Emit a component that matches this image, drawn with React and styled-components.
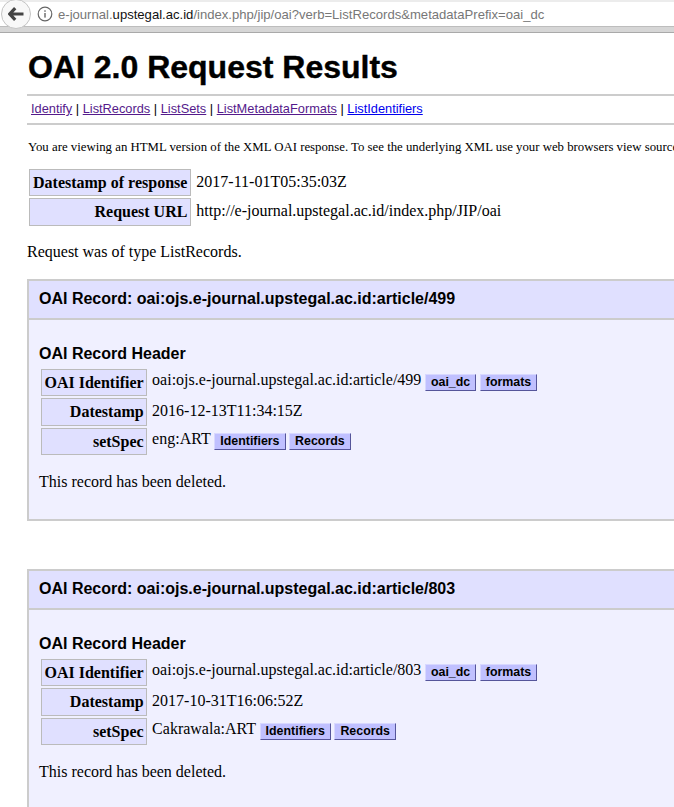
import React from 'react';
import styled, { createGlobalStyle } from 'styled-components';

const GlobalStyle = createGlobalStyle`
  html, body {
    margin: 0;
    padding: 0;
    width: 674px;
    height: 807px;
    overflow: hidden;
    background: #fff;
  }
  body {
    font-family: 'Liberation Serif', 'Times New Roman', serif;
    font-size: 16px;
    color: #000;
  }
`;
const Toolbar = styled.div`
  height: 33px;
  box-sizing: border-box;
  background: #d6d6d6;
  border-bottom: 1px solid #a9a9a9;
  padding-top: 2px;
  position: relative;
`;
const AddressBar = styled.div`
  height: 25px;
  box-sizing: border-box;
  background: #fff;
  border-bottom: 1px solid #bdbdbd;
  display: flex;
  align-items: center;
  padding-left: 37px;
  font-family: 'Liberation Sans', Arial, sans-serif;
  font-size: 13.1px;
  color: #777;
  white-space: nowrap;
`;
const TopStrip = styled.div`
  position: absolute;
  top: 0;
  left: 0;
  right: 0;
  height: 2px;
  background: #ececec;
`;
const BackButton = styled.div`
  position: absolute;
  left: 1px;
  top: -1px;
  width: 30px;
  height: 30px;
  box-sizing: border-box;
  border-radius: 50%;
  background: #f8f8f8;
  border: 1px solid #c4c4c4;
  display: flex;
  align-items: center;
  justify-content: center;
`;
const InfoIcon = styled.svg`
  width: 16px;
  height: 16px;
  margin-right: 5px;
  flex: none;
`;
const Host = styled.span`
  color: #111;
`;
const Page = styled.div`
  width: 760px;
  padding: 0 0 0 27px;
`;
const Title = styled.h1`
  font-family: 'Liberation Sans', Arial, sans-serif;
  font-size: 32px;
  line-height: 39px;
  font-weight: 700;
  margin: 0;
  padding: 15px 0 7px 1px;
  border-bottom: 2px solid #ccc;
  -webkit-text-stroke: 0.4px #000;
`;
const Nav = styled.div`
  font-family: 'Liberation Sans', Arial, sans-serif;
  font-size: 12.8px;
  line-height: 15px;
  padding: 5px 0 7px 4px;
  height: 15px;
  border-bottom: 2px solid #ccc;
`;
const NavLink = styled.a`
  color: ${(props) => (props.$visited ? '#551a8b' : '#00e')};
  text-decoration: underline;
`;
const Intro = styled.p`
  font-size: 12.8px;
  line-height: 14px;
  margin: 15px 0 13px 1px;
  white-space: nowrap;
`;
const InfoTable = styled.table`
  border-collapse: separate;
  border-spacing: 2px;
`;
const Label = styled.td`
  background: #e0e0ff;
  border: 1px solid #bbb;
  padding: 4px ${(props) => (props.$tight ? '2.5px' : '3px')};
  font-weight: 700;
  text-align: right;
  line-height: 17.4px;
  white-space: nowrap;
`;
const Value = styled.td`
  padding: 0 3px 3px 3px;
  line-height: 17px;
  white-space: nowrap;
`;
const Paragraph = styled.p`
  margin: ${(props) => props.$margin};
  line-height: 18px;
`;
const Record = styled.div`
  background: #f0f0ff;
  border: 2px solid #ccc;
  margin-bottom: 48px;
`;
const RecordTitle = styled.h2`
  font-family: 'Liberation Sans', Arial, sans-serif;
  font-size: 16px;
  line-height: 18px;
  margin: 0;
  padding: 9px 10px 10px;
  background: #e0e0ff;
  border-bottom: 2px solid #ccc;
`;
const RecordBody = styled.div`
  padding: 25px 10px 28px;
`;
const SectionTitle = styled.h3`
  font-family: 'Liberation Sans', Arial, sans-serif;
  font-size: 16px;
  line-height: 18px;
  margin: 0 0 4px;
`;
const Tag = styled.a`
  display: inline-block;
  font-family: 'Liberation Sans', Arial, sans-serif;
  font-size: 12.4px;
  line-height: 15px;
  font-weight: 700;
  color: #000;
  background: #c0c0ff;
  padding: 0 5px;
  margin-left: 3.6px;
  border-right: 1px solid #55559a;
  border-bottom: 1px solid #55559a;
  border-top: 1px solid #d8d8ff;
  border-left: 1px solid #d8d8ff;
  vertical-align: -1px;
`;

const records = [
  { id: '499', date: '2016-12-13T11:34:15Z', spec: 'eng:ART' },
  { id: '803', date: '2017-10-31T16:06:52Z', spec: 'Cakrawala:ART' },
];

const App = () => {
  return (
    <>
      <GlobalStyle />
      <Toolbar>
        <TopStrip />
        <AddressBar>
          <InfoIcon viewBox="0 0 16 16" fill="none">
            <circle cx="8" cy="8" r="6.8" stroke="#666" strokeWidth="1.2" />
            <rect x="7.3" y="7" width="1.4" height="4.6" fill="#666" />
            <rect x="7.3" y="4.3" width="1.4" height="1.5" fill="#666" />
          </InfoIcon>
          <span>
            e-journal.<Host>upstegal.ac.id</Host>/index.php/jip/oai?verb=ListRecords&amp;metadataPrefix=oai_dc
          </span>
        </AddressBar>
        <BackButton>
          <svg width="16" height="14" viewBox="0 0 16 14">
            <path d="M7.2 1.2 L1.8 7 L7.2 12.8 M2.5 7 H15.5" fill="none" stroke="#444" strokeWidth="3.2" />
          </svg>
        </BackButton>
      </Toolbar>
      <Page>
        <Title>OAI 2.0 Request Results</Title>
        <Nav>
          <NavLink $visited href="#">Identify</NavLink> | <NavLink $visited href="#">ListRecords</NavLink> |{' '}
          <NavLink $visited href="#">ListSets</NavLink> | <NavLink $visited href="#">ListMetadataFormats</NavLink> |{' '}
          <NavLink href="#">ListIdentifiers</NavLink>
        </Nav>
        <Intro>
          You are viewing an HTML version of the XML OAI response. To see the underlying XML use your web browsers view source option.
        </Intro>
        <InfoTable>
          <tbody>
            <tr>
              <Label>Datestamp of response</Label>
              <Value>2017-11-01T05:35:03Z</Value>
            </tr>
            <tr>
              <Label>Request URL</Label>
              <Value>http://e-journal.upstegal.ac.id/index.php/JIP/oai</Value>
            </tr>
          </tbody>
        </InfoTable>
        <Paragraph $margin="15px 0 18px">Request was of type ListRecords.</Paragraph>
        {records.map((record) => (
          <Record key={record.id}>
            <RecordTitle>OAI Record: oai:ojs.e-journal.upstegal.ac.id:article/{record.id}</RecordTitle>
            <RecordBody>
              <SectionTitle>OAI Record Header</SectionTitle>
              <InfoTable>
                <tbody>
                  <tr>
                    <Label $tight>OAI Identifier</Label>
                    <Value>
                      oai:ojs.e-journal.upstegal.ac.id:article/{record.id}
                      <Tag>oai_dc</Tag>
                      <Tag>formats</Tag>
                    </Value>
                  </tr>
                  <tr>
                    <Label $tight>Datestamp</Label>
                    <Value>{record.date}</Value>
                  </tr>
                  <tr>
                    <Label $tight>setSpec</Label>
                    <Value>
                      {record.spec}
                      <Tag>Identifiers</Tag>
                      <Tag>Records</Tag>
                    </Value>
                  </tr>
                </tbody>
              </InfoTable>
              <Paragraph $margin="16px 0 0">This record has been deleted.</Paragraph>
            </RecordBody>
          </Record>
        ))}
      </Page>
    </>
  );
};

export default App;
